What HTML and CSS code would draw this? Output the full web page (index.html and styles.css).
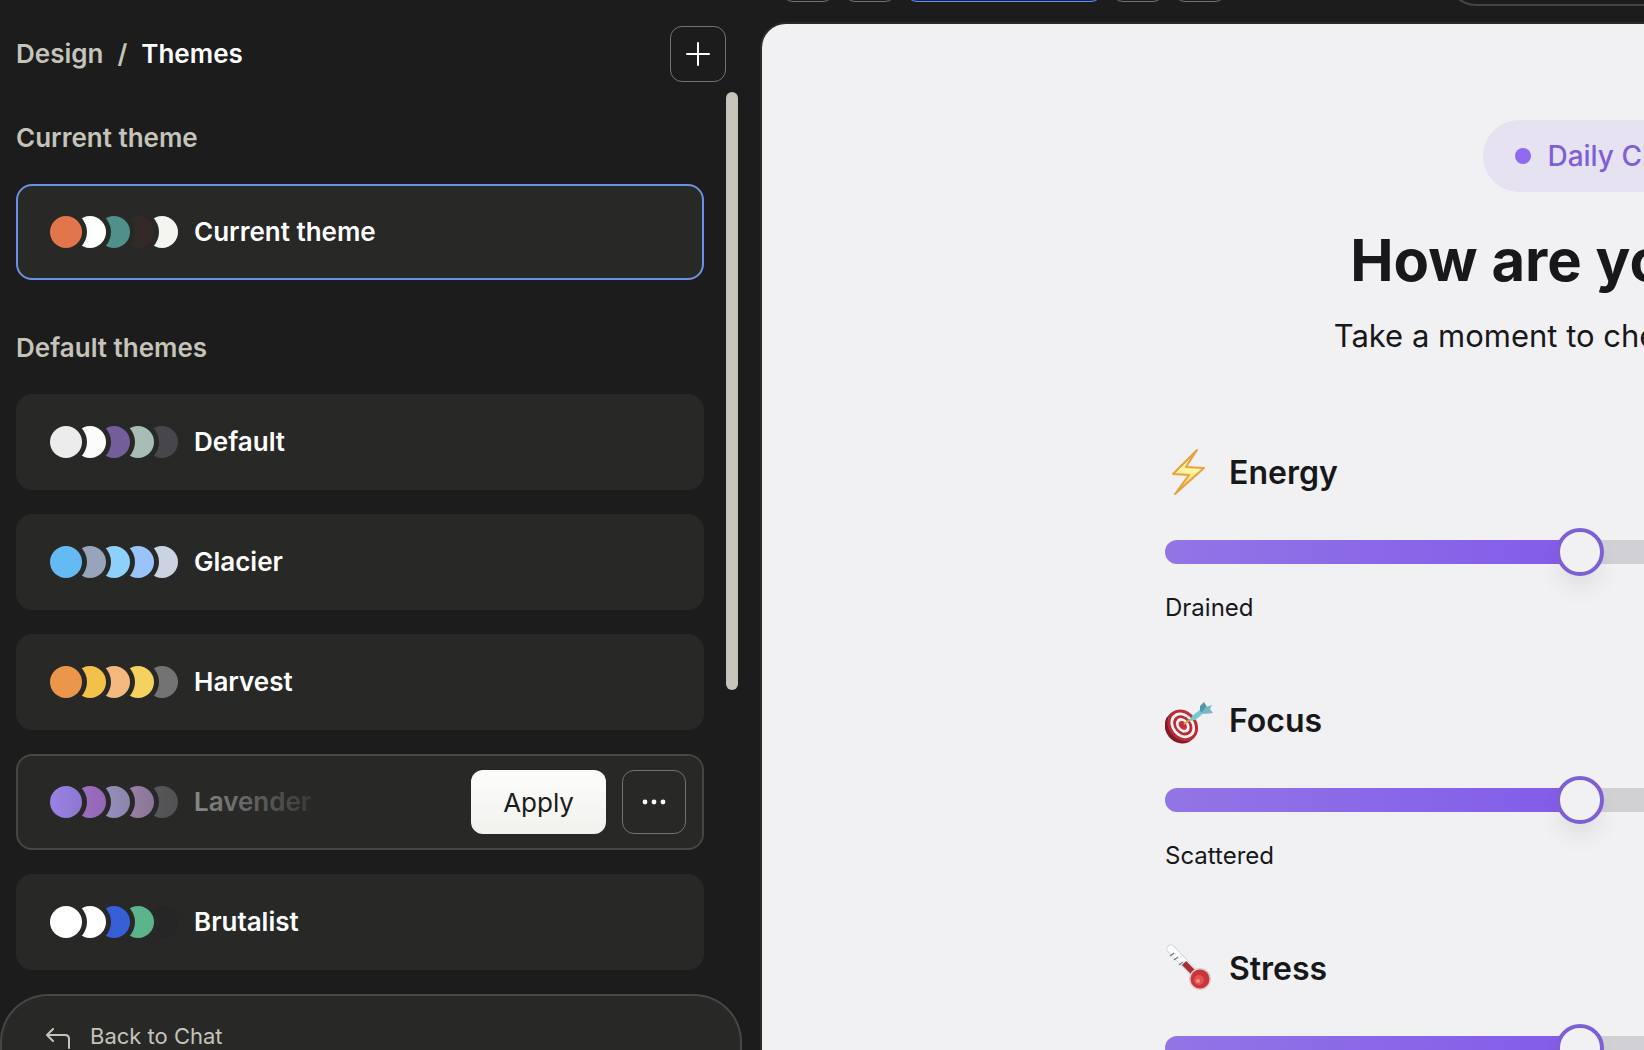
FILE: index.html
```
<!DOCTYPE html>
<html lang="en">
<head>
    <meta charset="UTF-8">
    <meta name="viewport" content="width=device-width, initial-scale=1.0">
    <title>Design / Themes</title>
    <link rel="stylesheet" href="styles.css">
</head>
<body>

<div class="app">
    <!-- Theme picker -->
    <aside class="sidebar">
        <header class="sidebar-header">
            <nav class="breadcrumb">
                <a href="#">Design</a>
                <span>/</span>
                <h1>Themes</h1>
            </nav>
            <button type="button" class="icon-button" aria-label="New theme">
                <svg width="24" height="24" viewBox="0 0 24 24" fill="none" stroke="#fff" stroke-width="2" stroke-linecap="round"><path d="M12 1v22M1 12h22"/></svg>
            </button>
        </header>

        <div class="sidebar-body">
            <div class="theme-list">
                <h2>Current theme</h2>
                <div class="theme selected current">
                    <div class="swatches"><i></i><i></i><i></i><i></i><i></i></div>
                    <span>Current theme</span>
                </div>

                <h2>Default themes</h2>
                <div class="theme default">
                    <div class="swatches"><i></i><i></i><i></i><i></i><i></i></div>
                    <span>Default</span>
                </div>
                <div class="theme glacier">
                    <div class="swatches"><i></i><i></i><i></i><i></i><i></i></div>
                    <span>Glacier</span>
                </div>
                <div class="theme harvest">
                    <div class="swatches"><i></i><i></i><i></i><i></i><i></i></div>
                    <span>Harvest</span>
                </div>
                <div class="theme hovered lavender">
                    <div class="swatches"><i></i><i></i><i></i><i></i><i></i></div>
                    <span>Lavender</span>
                    <div class="actions">
                        <button type="button" class="apply">Apply</button>
                        <button type="button" class="icon-button more" aria-label="More options">
                            <svg width="24" height="24" viewBox="0 0 24 24" fill="#fff"><circle cx="3" cy="12" r="2.4"/><circle cx="12" cy="12" r="2.4"/><circle cx="21" cy="12" r="2.4"/></svg>
                        </button>
                    </div>
                </div>
                <div class="theme brutalist">
                    <div class="swatches"><i></i><i></i><i></i><i></i><i></i></div>
                    <span>Brutalist</span>
                </div>
            </div>
            <div class="scrollbar"></div>
        </div>

        <footer class="composer">
            <button type="button" class="back">
                <svg width="24" height="24" viewBox="0 0 24 24" fill="none" stroke="currentColor" stroke-width="2" stroke-linecap="round" stroke-linejoin="round"><path d="M7 1L1 7l6 6M1 7h18q4 0 4 4v9"/></svg>
                Back to Chat
            </button>
        </footer>
    </aside>

    <!-- Preview of the generated app -->
    <main class="stage">
        <div class="toolbar">
            <button type="button" class="tool" aria-label="Preview"></button>
            <button type="button" class="tool" aria-label="Code"></button>
            <button type="button" class="tool active" aria-label="Design"></button>
            <button type="button" class="tool" aria-label="Data"></button>
            <button type="button" class="tool" aria-label="Settings"></button>
            <div class="address"></div>
        </div>

        <div class="preview">
            <div class="checkin">
                <div class="badge">Daily Check-in</div>
                <h2 class="title">How are you today?</h2>
                <p class="subtitle">Take a moment to check in with yourself</p>

                <section class="metric">
                    <label for="energy">
                        <svg width="48" height="48" viewBox="0 0 48 48"><defs><linearGradient id="bolt" x1="0" y1="0" x2="0" y2="1"><stop offset="0" stop-color="#f6cf62"/><stop offset="0.45" stop-color="#fff7a8"/><stop offset="1" stop-color="#f9b92c"/></linearGradient></defs><path d="M32 2L8 26l16 1-14 19 29-26-18-1z" fill="url(#bolt)" stroke="#e4a341" stroke-width="2" stroke-linejoin="round"/></svg>
                        Energy
                    </label>
                    <input type="range" id="energy" min="1" max="10" value="5">
                    <div class="scale"><span>Drained</span><span>Energized</span></div>
                </section>

                <section class="metric">
                    <label for="focus">
                        <svg width="48" height="48" viewBox="0 0 48 48"><g transform="rotate(50 17 30)"><ellipse cx="17" cy="32" rx="17" ry="15" fill="#7e1d26"/><ellipse cx="17" cy="29" rx="17" ry="14" fill="#b92c36"/><ellipse cx="17" cy="29" rx="14" ry="11" fill="#f7f1f1"/><ellipse cx="17" cy="29" rx="11" ry="8.500" fill="#b92c36"/><ellipse cx="17" cy="29" rx="8" ry="6" fill="#f7f1f1"/><ellipse cx="17" cy="29" rx="5" ry="3.500" fill="#c23038"/></g><path d="M19 28l7-5" stroke="#d9a441" stroke-width="2"/><path d="M25 25l2-5 9-7 3 4-9 7z" fill="#74cbd2"/><path d="M35 15l0-5 4-4 3 5-4 6z" fill="#4e98a8"/><path d="M37 16l4-5 6-2-2 4 3 4-9 1z" fill="#78b6c4"/></svg>
                        Focus
                    </label>
                    <input type="range" id="focus" min="1" max="10" value="5">
                    <div class="scale"><span>Scattered</span><span>Focused</span></div>
                </section>

                <section class="metric">
                    <label for="stress">
                        <svg width="48" height="48" viewBox="0 0 48 48"><path d="M6 5L32 32" stroke="#cbd8df" stroke-width="9" stroke-linecap="round"/><path d="M6 5L32 32" stroke="#fbfdfe" stroke-width="7" stroke-linecap="round"/><path d="M19 19L34 34" stroke="#a92f35" stroke-width="6"/><path d="M5 12l4-3M9 16l4-3M14 21l4-3" stroke="#75848c" stroke-width="1.5"/><circle cx="35" cy="35" r="11" fill="#dcc9cd"/><circle cx="35" cy="35" r="9.500" fill="#c9363a"/><circle cx="34" cy="36" r="5" fill="#de5450"/><circle cx="33" cy="37" r="2" fill="#f58b80"/></svg>
                        Stress
                    </label>
                    <input type="range" id="stress" min="1" max="10" value="5">
                    <div class="scale"><span>Calm</span><span>Overwhelmed</span></div>
                </section>
            </div>
        </div>
    </main>
</div>

</body>
</html>
```
FILE: styles.css
```
* {
    box-sizing: border-box;
}
body {
    margin: 0;
    overflow: hidden;
    background-color: #1c1c1c;
    color: #fff;
    font-family: Inter, "Liberation Sans", sans-serif;
}
h1, h2, p {
    margin: 0;
}
button {
    font-family: inherit;
    cursor: pointer;
}
.app {
    display: flex;
    height: 100vh;
    overflow: hidden;
}

/* Sidebar */
.sidebar {
    flex: 0 0 762px;
    display: flex;
    flex-direction: column;
}
.sidebar-header {
    display: flex;
    align-items: center;
    justify-content: space-between;
    padding: 26px 36px 10px 16px;
}
.breadcrumb {
    display: flex;
    gap: 14px;
    font-size: 26px;
    line-height: 32px;
    font-weight: 600;
    color: #c5c3ba;
}
.breadcrumb a {
    color: inherit;
    text-decoration: none;
}
.breadcrumb h1 {
    font-size: 26px;
    font-weight: 600;
    color: #fff;
}
.icon-button {
    display: flex;
    align-items: center;
    justify-content: center;
    width: 56px;
    height: 56px;
    padding: 0;
    background: none;
    border: 1px solid #737370;
    border-radius: 12px;
}
.sidebar-body {
    flex: 1;
    display: flex;
    gap: 22px;
    min-height: 0;
    padding: 0 24px 0 16px;
}
.theme-list {
    flex: 1;
    display: flex;
    flex-direction: column;
    gap: 24px;
    padding-top: 30px;
    overflow: hidden;
}
.theme-list h2 {
    padding-bottom: 6px;
    font-size: 26px;
    line-height: 32px;
    font-weight: 600;
    color: #c5c3ba;
}
.theme + h2 {
    margin-top: 28px;
}
.scrollbar {
    width: 12px;
    height: 598px;
    background-color: #c5c3ba;
    border-radius: 6px;
}
.theme {
    flex: none;
    position: relative;
    display: flex;
    align-items: center;
    gap: 16px;
    height: 96px;
    padding: 0 32px;
    background-color: #282827;
    border: 2px solid #282827;
    border-radius: 16px;
    font-size: 26px;
    line-height: 32px;
    font-weight: 600;
}
.theme.selected {
    border-color: #6c92e6;
}
.theme.hovered {
    border-color: #464645;
}

/* Each swatch overlaps the one after it */
.swatches {
    display: flex;
    isolation: isolate;
}
.swatches i {
    width: 32px;
    height: 32px;
    border-radius: 50%;
    box-shadow: 0 0 0 5px #282827;
}
.swatches i + i {
    margin-left: -8px;
}
.swatches i:nth-child(1) { background-color: var(--c1); z-index: 5; }
.swatches i:nth-child(2) { background-color: var(--c2); z-index: 4; }
.swatches i:nth-child(3) { background-color: var(--c3); z-index: 3; }
.swatches i:nth-child(4) { background-color: var(--c4); z-index: 2; }
.swatches i:nth-child(5) { background-color: var(--c5); z-index: 1; }

.current { --c1: #e1764d; --c2: #ffffff; --c3: #50908a; --c4: #332a28; --c5: #f4f4f0; }
.default { --c1: #ececec; --c2: #fcfcfc; --c3: #735e9b; --c4: #a8bdb5; --c5: #47464b; }
.glacier { --c1: #64baf3; --c2: #98a4b9; --c3: #8dd1fb; --c4: #9ac2fb; --c5: #cad4e0; }
.harvest { --c1: #ec964b; --c2: #f3c04a; --c3: #f3b87d; --c4: #f5d260; --c5: #737373; }
.lavender { --c1: #a78bfa; --c2: #b97fe8; --c3: #c0b6f4; --c4: #d3aeea; --c5: #7a7a80; }
.brutalist { --c1: #ffffff; --c2: #ffffff; --c3: #365ed6; --c4: #5bb58b; --c5: #262627; }

/* Row actions fade the row out behind them */
.actions {
    position: absolute;
    inset: 0;
    display: flex;
    align-items: center;
    justify-content: flex-end;
    gap: 16px;
    padding-right: 16px;
    border-radius: 14px;
    background: linear-gradient(90deg, transparent, #282827 320px);
}
.apply {
    height: 64px;
    padding: 0 32px;
    background: linear-gradient(#fdfdfb, #f1f1ee);
    border: none;
    border-radius: 12px;
    font-size: 26px;
    color: #1c1c1c;
}
.more {
    width: 64px;
    height: 64px;
}

.composer {
    flex: none;
    height: 56px;
    margin-right: 20px;
    padding: 24px 44px 0;
    background-color: #282827;
    border: 2px solid #464645;
    border-bottom: none;
    border-radius: 48px 48px 0 0;
    overflow: hidden;
}
.back {
    display: flex;
    align-items: center;
    gap: 20px;
    padding: 0;
    background: none;
    border: none;
    font-size: 22px;
    line-height: 32px;
    color: #c5c3ba;
}
.back svg {
    margin-top: 8px;
}

/* Stage */
.stage {
    flex: 1 0 1734px;
    display: flex;
    flex-direction: column;
}
.toolbar {
    flex: none;
    display: flex;
    align-items: center;
    gap: 8px;
    height: 64px;
    margin: -58px 0 18px;
    padding: 0 19px;
}
.tool {
    width: 54px;
    height: 56px;
    background: none;
    border: 1px solid #737370;
    border-radius: 12px;
}
.tool.active {
    width: 198px;
    background-color: #17245c;
    border-color: #6c92e6;
}
.address {
    flex: 1;
    height: 64px;
    margin-left: 210px;
    border: 2px solid #464645;
    border-radius: 32px;
}
.preview {
    flex: 1;
    padding-top: 96px;
    background-color: #f1f1f4;
    border-radius: 24px 0 0 0;
    box-shadow: 0 0 0 2px #2b2b2a;
    color: #18181b;
    overflow: hidden;
}
.checkin {
    display: flex;
    flex-direction: column;
    align-items: center;
    max-width: 928px;
    margin: 0 auto;
}
.badge {
    display: flex;
    align-items: center;
    gap: 16px;
    height: 72px;
    padding: 0 32px;
    background-color: #e7e2f2;
    border-radius: 36px;
    font-size: 28px;
    font-weight: 500;
    color: #7f5fd6;
}
.badge::before {
    content: "";
    width: 16px;
    height: 16px;
    border-radius: 50%;
    background-color: #8f69f0;
}
.title {
    margin-top: 32px;
    font-size: 58px;
    line-height: 72px;
    font-weight: 700;
}
.subtitle {
    margin: 16px 0;
    font-size: 31px;
    line-height: 48px;
}
.metric {
    width: 100%;
    margin-top: 72px;
}
.metric label {
    display: flex;
    align-items: center;
    gap: 16px;
    height: 48px;
    font-size: 32px;
    font-weight: 600;
}
.metric input {
    -webkit-appearance: none;
    appearance: none;
    display: block;
    width: 100%;
    height: 48px;
    margin: 32px 0 16px;
    background: none;
}
.metric input::-webkit-slider-runnable-track {
    height: 24px;
    border-radius: 12px;
    background: linear-gradient(90deg, #9375e6, #825be9 45%, #d1d1d5 45%);
}
.metric input::-webkit-slider-thumb {
    -webkit-appearance: none;
    width: 48px;
    height: 48px;
    margin-top: -12px;
    background-color: #f1f1f4;
    border: 4px solid #7f5fd6;
    border-radius: 50%;
    box-shadow: 0 16px 24px -4px rgba(0, 0, 0, 0.08);
}
.scale {
    display: flex;
    justify-content: space-between;
    font-size: 24px;
    line-height: 32px;
}
```
